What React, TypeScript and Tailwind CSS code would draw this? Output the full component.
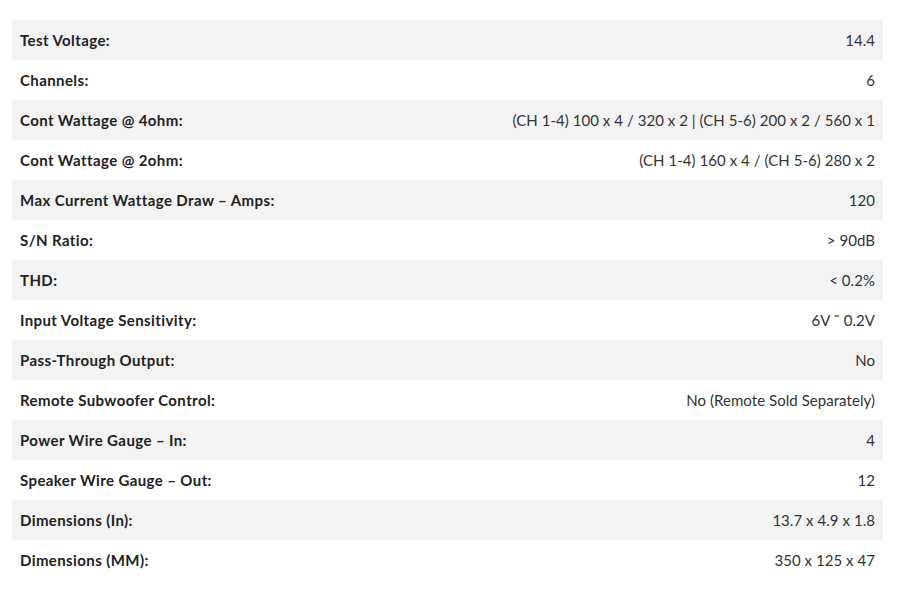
import React from "react";

const rows: [string, string][] = [
  ["Test Voltage:", "14.4"],
  ["Channels:", "6"],
  ["Cont Wattage @ 4ohm:", "(CH 1-4) 100 x 4 / 320 x 2 | (CH 5-6) 200 x 2 / 560 x 1"],
  ["Cont Wattage @ 2ohm:", "(CH 1-4) 160 x 4 / (CH 5-6) 280 x 2"],
  ["Max Current Wattage Draw – Amps:", "120"],
  ["S/N Ratio:", "> 90dB"],
  ["THD:", "< 0.2%"],
  ["Input Voltage Sensitivity:", "6V ˜ 0.2V"],
  ["Pass-Through Output:", "No"],
  ["Remote Subwoofer Control:", "No (Remote Sold Separately)"],
  ["Power Wire Gauge – In:", "4"],
  ["Speaker Wire Gauge – Out:", "12"],
  ["Dimensions (In):", "13.7 x 4.9 x 1.8"],
  ["Dimensions (MM):", "350 x 125 x 47"],
];

export default function App() {
  return (
    <div className="w-[899px] h-[594px] bg-white pt-5 pl-3 pr-4" style={{ fontFamily: "Lato, 'Open Sans', sans-serif" }}>
      <div className="flex flex-col">
        {rows.map(([k, v], i) => (
          <div
            key={k}
            className={`flex h-10 items-center justify-between px-2 text-[15px] ${i % 2 === 0 ? "bg-[#f3f3f3]" : "bg-white"}`}
          >
            <span className="font-bold tracking-[0.4px] text-[#222]">{k}</span>
            <span className="text-[#333] tracking-[0.05px]">{v}</span>
          </div>
        ))}
      </div>
    </div>
  );
}
